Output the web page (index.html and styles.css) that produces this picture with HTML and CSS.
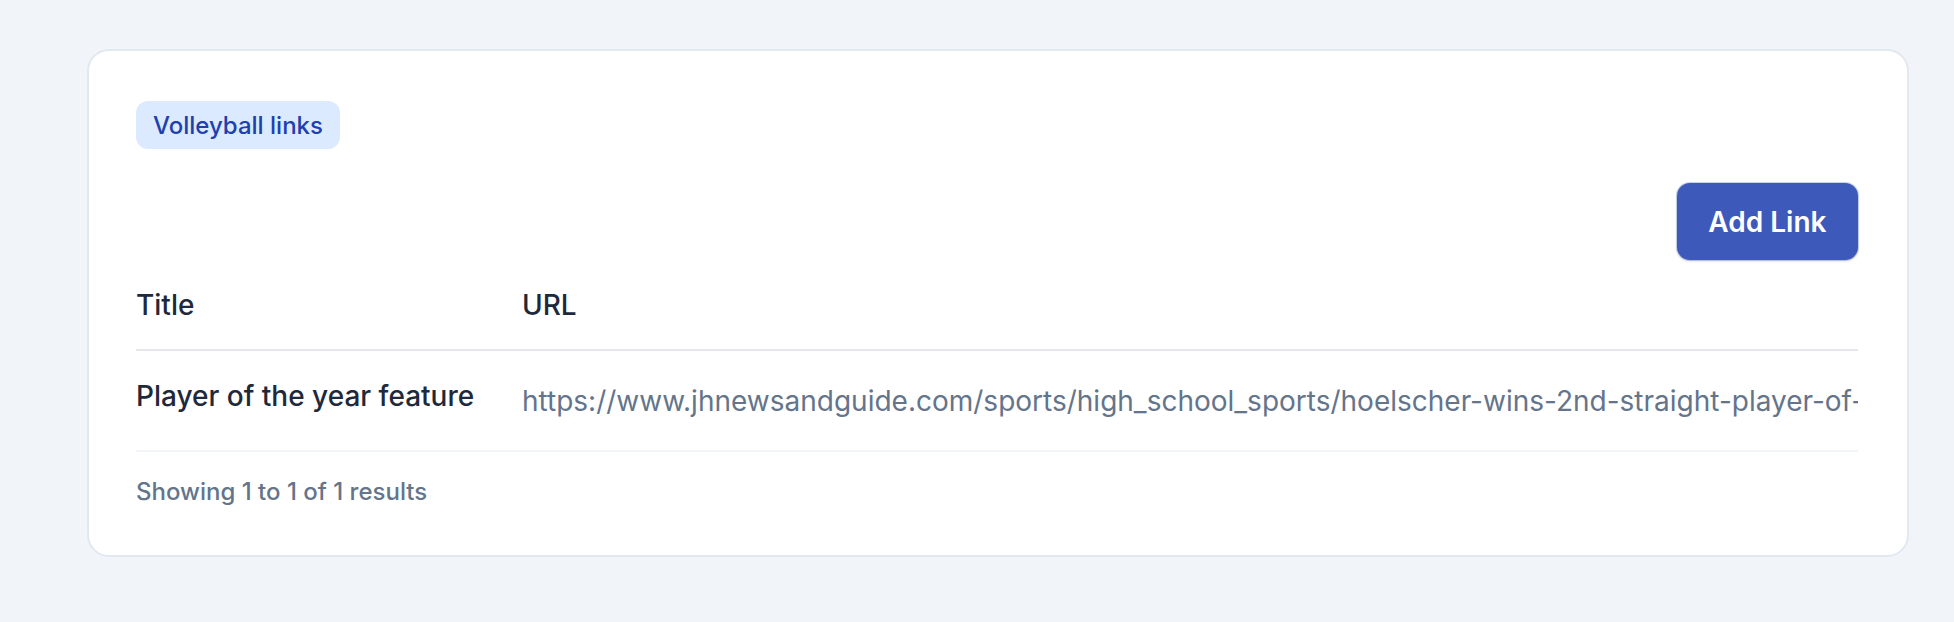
FILE: index.html
```html
<!DOCTYPE html>
<html lang="en">
<head>
  <meta charset="UTF-8">
  <title>Volleyball links</title>
  <link rel="stylesheet" href="styles.css">
</head>
<body>

  <div class="card">
    <span class="badge">Volleyball links</span>

    <div class="toolbar">
      <button type="button" class="btn">Add Link</button>
    </div>

    <table class="links">
      <colgroup>
        <col class="col-title">
        <col>
      </colgroup>
      <thead>
        <tr>
          <th>Title</th>
          <th>URL</th>
        </tr>
      </thead>
      <tbody>
        <tr>
          <td class="cell-title">Player of the year feature</td>
          <td class="cell-url">https://www.jhnewsandguide.com/sports/high_school_sports/hoelscher-wins-2nd-straight-player-of-the-year-award/article_5c1e2b7a.html</td>
        </tr>
      </tbody>
    </table>

    <p class="summary">Showing 1 to 1 of 1 results</p>
  </div>

</body>
</html>
```

FILE: styles.css
```css
* {
  box-sizing: border-box;
}

body {
  margin: 0;
  padding: 49px 45px 40px 87px;
  background: #f1f5f9;
  font-family: Inter, 'Liberation Sans', sans-serif;
  color: #1e293b;
}

.card {
  background: #ffffff;
  border: 2px solid #e2e8f0;
  border-radius: 22px;
  padding: 50px 49px 46px 47px;
}

.badge {
  display: inline-block;
  background: #dbeafe;
  color: #1e40af;
  font-size: 24px;
  font-weight: 500;
  line-height: 35px;
  padding: 6.5px 17px;
  border-radius: 12px;
}

.toolbar {
  display: flex;
  justify-content: flex-end;
  margin-top: 34px;
}

.btn {
  font-family: inherit;
  font-size: 28px;
  font-weight: 600;
  line-height: 42px;
  color: #ffffff;
  background: #3d5abb;
  border: none;
  border-radius: 13px;
  padding: 17.5px 31.5px;
  box-shadow: 0 1px 3px rgba(15, 23, 42, 0.18), 0 0 0 1px rgba(61, 90, 187, 0.25);
  cursor: pointer;
}

.links {
  width: 100%;
  border-collapse: collapse;
  table-layout: fixed;
}

.col-title {
  width: 386px;
}

.links th {
  text-align: left;
  font-size: 28px;
  font-weight: 500;
  line-height: 42px;
  padding: 24px 0 23px;
  border-bottom: 2px solid #e5e7eb;
  color: #1e293b;
}

.links td {
  font-size: 28px;
  line-height: 42px;
  padding: 24px 0 23px;
  vertical-align: top;
  border-bottom: 2px solid #f1f5f9;
}

.cell-title {
  font-weight: 500;
  color: #1e293b;
  white-space: nowrap;
}

.cell-url {
  color: #64748b;
  line-height: 52px !important;
  white-space: nowrap;
  overflow: hidden;
}

.summary {
  margin: 22px 0 0;
  font-size: 24px;
  font-weight: 500;
  line-height: 35px;
  color: #64748b;
}
```
